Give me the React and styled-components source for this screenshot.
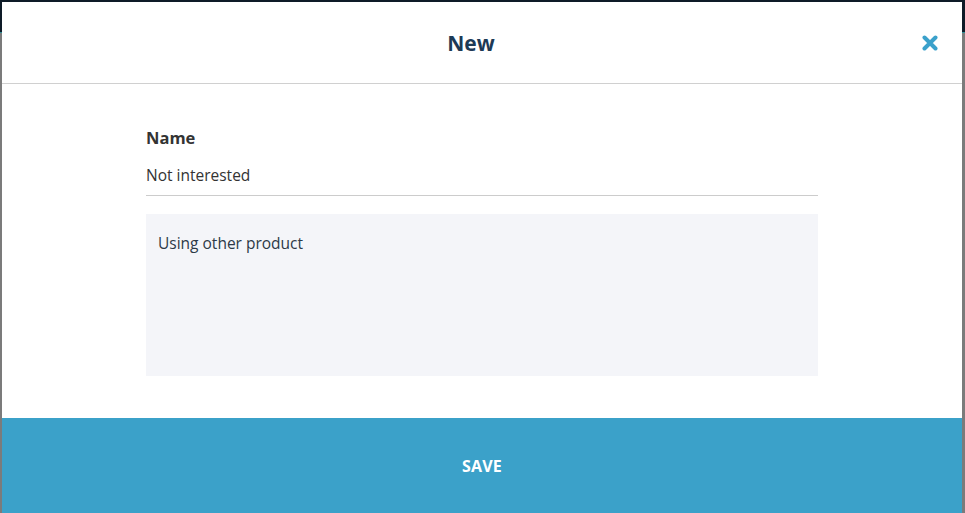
import React from "react";
import styled, { createGlobalStyle } from "styled-components";

const Global = createGlobalStyle`
  html, body { margin: 0; padding: 0; height: 100%; overflow: hidden; }
  body { font-family: "Open Sans", "Noto Sans", sans-serif; }
  #root { height: 100%; }
`;

const Page = styled.div`
  height: 100%;
  display: flex;
  flex-direction: column;
  background: #7b7b7b;
`;

const TopBar = styled.div`
  height: 32px;
  flex: none;
  background: #0e1b28;
  border-bottom: 1px solid #2f8f96;
`;

const Backdrop = styled.div`
  flex: 1;
  background: #7b7b7b;
`;

const Modal = styled.div`
  position: fixed;
  top: 2px;
  left: 2px;
  width: 960px;
  display: flex;
  flex-direction: column;
  background: #ffffff;
`;

const Header = styled.div`
  height: 81px;
  display: flex;
  align-items: center;
  gap: 6px;
  padding: 0 24px;
  border-bottom: 1px solid #d0d0d0;
`;

const Title = styled.h2`
  flex: 1;
  margin: 0;
  text-align: center;
  font-size: 21px;
  font-weight: 700;
  color: #1d3a56;
`;

const CloseButton = styled.button`
  width: 16px;
  height: 16px;
  padding: 0;
  border: none;
  background: none;
  display: flex;
  cursor: pointer;
  color: #3ba1cb;
`;

const Body = styled.div`
  padding: 43px 0 42px;
  display: flex;
  justify-content: center;
`;

const Form = styled.div`
  width: 672px;
  display: flex;
  flex-direction: column;
`;

const Label = styled.label`
  font-size: 16.5px;
  line-height: 22px;
  font-weight: 700;
  color: #333333;
`;

const Input = styled.div`
  margin-top: 6px;
  padding: 10px 0;
  font-size: 15.5px;
  line-height: 20px;
  color: #333333;
  border-bottom: 1px solid #cccccc;
`;

const TextArea = styled.div`
  margin-top: 18px;
  height: 162px;
  box-sizing: border-box;
  padding: 19px 12px;
  background: #f4f5f9;
  font-size: 15.5px;
  line-height: 20px;
  color: #2d3a48;
`;

const SaveBar = styled.button`
  height: 98px;
  border: none;
  background: #3ba1c9;
  color: #ffffff;
  font-family: "Open Sans", "Noto Sans", sans-serif;
  font-size: 16px;
  font-weight: 700;
  letter-spacing: 0.2px;
  padding: 0 0 2px;
`;

const CloseIcon = () => (
  <svg width="16" height="16" viewBox="0 0 16 16">
    <path d="M2.5 2.5 L13.5 13.5 M13.5 2.5 L2.5 13.5" stroke="currentColor" strokeWidth="4" strokeLinecap="round" />
  </svg>
);

export default function App() {
  return (
    <>
      <Global />
      <Page>
        <TopBar />
        <Backdrop />
      </Page>
      <Modal>
        <Header>
          <Title>New</Title>
          <CloseButton aria-label="Close"><CloseIcon /></CloseButton>
        </Header>
        <Body>
          <Form>
            <Label>Name</Label>
            <Input>Not interested</Input>
            <TextArea>Using other product</TextArea>
          </Form>
        </Body>
        <SaveBar>SAVE</SaveBar>
      </Modal>
    </>
  );
}
